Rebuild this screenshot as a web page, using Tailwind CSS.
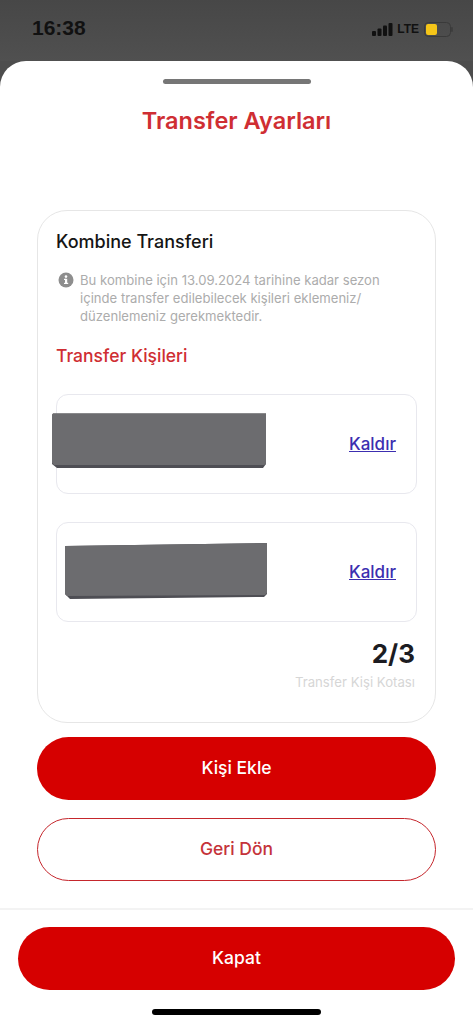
<!DOCTYPE html>
<html>
<head>
    <meta charset="UTF-8">
    <title>Transfer Ayarları</title>
    <script src="https://cdn.jsdelivr.net/npm/@tailwindcss/browser@4"></script>
</head>
<body class="bg-white font-['Inter',sans-serif] text-[#1c1c1e]">
    <div class="relative w-[473px] h-[1024px] overflow-hidden bg-[#4d4d4d]">
        <!-- Status bar -->
        <div class="h-[61px] pl-[32px] pr-[20px] pt-[15px] flex justify-between items-start bg-gradient-to-b from-[#474747] to-[#505050]">
            <span class="text-[21px] leading-[26px] font-bold font-['Liberation_Sans',sans-serif] text-[#111]">16:38</span>
            <div class="flex items-center gap-[3px] h-[28px]">
                <svg class="w-[22px] h-[14px]" viewBox="0 0 22 14" fill="#111">
                    <rect x="0" y="9" width="4" height="5" rx="1"/>
                    <rect x="5.5" y="6.5" width="4" height="7.5" rx="1"/>
                    <rect x="11" y="3.5" width="4" height="10.5" rx="1"/>
                    <rect x="16.5" y="1" width="4" height="13" rx="1"/>
                </svg>
                <span class="text-[12px] leading-none font-bold font-['Liberation_Sans',sans-serif] text-[#111]">LTE</span>
                <svg class="ml-[2px] w-[29px] h-[15px]" viewBox="0 0 29 15">
                    <rect x="0.5" y="0.5" width="26" height="14" rx="4" fill="none" stroke="#3a3a3a"/>
                    <rect x="2" y="2" width="11" height="11" rx="2" fill="#f5c518"/>
                    <rect x="27.2" y="5" width="1.5" height="5" rx="0.7" fill="#3a3a3a"/>
                </svg>
            </div>
        </div>

        <!-- Sheet -->
        <div class="h-[963px] bg-white rounded-t-[26px] flex flex-col">
            <div class="mt-[18px] mx-auto w-[148px] h-[5px] rounded-full bg-[#767676]"></div>
            <h1 class="mt-[21px] text-center text-[23.5px] leading-[32px] font-semibold text-[#cf2e33]">Transfer Ayarları</h1>

            <!-- Card -->
            <div class="relative mt-[73px] mx-[37px] h-[513px] rounded-[30px] border border-[#e6e6e6] px-[18px] pt-[20px]">
                <h2 class="text-[18px] leading-[22px] font-medium text-[#151515]">Kombine Transferi</h2>
                <div class="mt-[18px] flex gap-[6px] pl-[2px]">
                    <svg class="w-[16px] h-[16px] mt-[1px] shrink-0" viewBox="0 0 16 16">
                        <circle cx="8" cy="8" r="7.5" fill="#8e8e8e"/>
                        <rect x="7" y="6.8" width="2.2" height="5" fill="#fff"/>
                        <rect x="6" y="6.8" width="2" height="1.2" fill="#fff"/>
                        <rect x="6" y="10.8" width="4.2" height="1.2" fill="#fff"/>
                        <circle cx="8" cy="4.6" r="1.3" fill="#fff"/>
                    </svg>
                    <p class="text-[13.1px] leading-[18px] text-[#acacac]">Bu kombine için 13.09.2024 tarihine kadar sezon<br>içinde transfer edilebilecek kişileri eklemeniz/<br>düzenlemeniz gerekmektedir.</p>
                </div>
                <h3 class="mt-[19px] text-[17.5px] leading-[24px] font-medium text-[#cf2e33]">Transfer Kişileri</h3>

                <div class="mt-[26px] flex flex-col gap-[28px]">
                    <div class="h-[100px] rounded-[12px] border border-[#e8e8ee] flex items-center justify-end pr-[20px] pt-[1px]">
                        <a class="text-[17px] font-medium underline text-[#3c2eb0]">Kaldır</a>
                    </div>
                    <div class="h-[100px] rounded-[12px] border border-[#e8e8ee] flex items-center justify-end pr-[20px] pt-[1px]">
                        <a class="text-[17px] font-medium underline text-[#3c2eb0]">Kaldır</a>
                    </div>
                </div>

                <div class="mt-[13px] pr-[2px] text-right">
                    <div class="text-[26px] leading-[38px] font-bold text-[#1c1c22]">2/3</div>
                    <div class="text-[13.2px] leading-[18px] text-[#d6d6d6]">Transfer Kişi Kotası</div>
                </div>

                <!-- Redaction blocks over the names -->
                <svg class="absolute left-[14px] top-[202px] w-[216px] h-[57px]" viewBox="0 0 216 57">
                    <path d="M1 0.5H214V51L211 55H5L0 51V2Z" fill="#4e4e54"/>
                    <path d="M1 0.5H214V51L212 52H2L0 50V2Z" fill="#6c6c6f"/>
                </svg>
                <svg class="absolute left-[27px] top-[332px] w-[204px] h-[57px]" viewBox="0 0 204 57">
                    <path d="M0 3L202 0V51L199 54L5 56L0 51Z" fill="#4e4e54"/>
                    <path d="M0 3L202 0V50L200 52L2 53L0 51Z" fill="#6c6c6f"/>
                </svg>
            </div>

            <!-- Actions -->
            <button class="mt-[14px] mx-[37px] h-[63px] rounded-full bg-[#d60000] text-white text-[17.5px] font-medium">Kişi Ekle</button>
            <button class="mt-[18px] mx-[37px] h-[63px] rounded-full border border-[#c5262c] bg-white text-[#c5333a] text-[17.5px] font-medium">Geri Dön</button>

            <!-- Footer -->
            <div class="mt-[27px] border-t-2 border-[#f3f3f3] flex-1 flex flex-col">
                <button class="mt-[17px] mx-[18px] h-[63px] rounded-full bg-[#d60000] text-white text-[17.5px] font-medium">Kapat</button>
                <div class="mt-[19px] mx-auto w-[169px] h-[6px] rounded-full bg-black"></div>
            </div>
        </div>
    </div>
</body>
</html>
